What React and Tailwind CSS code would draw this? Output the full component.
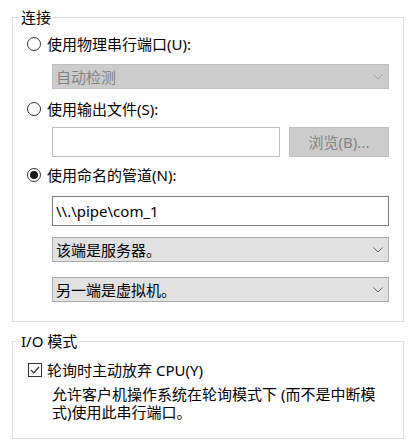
import React from 'react';

const Chevron = ({ color = '#606060' }) => (
  <svg width="10" height="6" viewBox="0 0 10 6" className="shrink-0">
    <path d="M0.5 0.5 L5 5 L9.5 0.5" fill="none" stroke={color} strokeWidth="1" />
  </svg>
);

const Radio = ({ checked }) => (
  <div className="w-[14px] h-[14px] rounded-full border border-[#333333] bg-white flex items-center justify-center shrink-0">
    {checked && <div className="w-[8px] h-[8px] rounded-full bg-[#1a1a1a]" />}
  </div>
);

const Checkbox = () => (
  <div className="w-[14px] h-[14px] border border-[#333333] bg-white flex items-center justify-center shrink-0">
    <svg width="10" height="8" viewBox="0 0 10 8">
      <path d="M1 4 L3.8 6.8 L9 1" fill="none" stroke="#333333" strokeWidth="1.2" />
    </svg>
  </div>
);

const Select = ({ text, disabled }) => (
  <div
    className={`ml-[39px] w-[337px] h-[25px] flex items-center justify-between pl-[3px] pr-[5px] border ${
      disabled ? 'bg-[#cccccc] border-[#c0c0c0] text-[#838383]' : 'bg-[#e1e1e1] border-[#adadad] text-black'
    }`}
  >
    <span>{text}</span>
    <Chevron color={disabled ? '#a6a6a6' : '#606060'} />
  </div>
);

export default function App() {
  return (
    <div className="w-[415px] h-[448px] bg-white pt-[7px] pl-[12px] text-[15px] leading-[20px] text-black font-['Noto_Sans','Noto_Sans_CJK_SC',sans-serif]">
      <fieldset className="w-[392px] border border-[#dcdcdc] pt-[7px] pb-[19px]">
        <legend className="ml-[6px] px-[2px]">连接</legend>

        <div className="flex items-center ml-[14px] gap-[6px]">
          <Radio />
          <span>使用物理串行端口(U):</span>
        </div>
        <div className="mt-[10px]">
          <Select text="自动检测" disabled />
        </div>

        <div className="flex items-center ml-[14px] gap-[6px] mt-[10px]">
          <Radio />
          <span>使用输出文件(S):</span>
        </div>
        <div className="flex ml-[39px] mt-[8px] gap-[9px]">
          <div className="w-[228px] h-[30px] border border-[#bfbfbf] bg-white" />
          <div className="w-[100px] h-[30px] border border-[#bfbfbf] bg-[#cccccc] text-[#838383] flex items-center justify-center">
            浏览(B)...
          </div>
        </div>

        <div className="flex items-center ml-[14px] gap-[6px] mt-[8px]">
          <Radio checked />
          <span>使用命名的管道(N):</span>
        </div>
        <div className="ml-[39px] mt-[11px] w-[337px] h-[30px] border border-[#7a7a7a] bg-white flex items-center pl-[3px]">
          {'\\\\.\\pipe\\com_1'}
        </div>
        <div className="mt-[11px]">
          <Select text="该端是服务器。" />
        </div>
        <div className="mt-[15px]">
          <Select text="另一端是虚拟机。" />
        </div>
      </fieldset>

      <fieldset className="w-[392px] border border-[#dcdcdc] mt-[9px] pt-[9px] pb-[17px]">
        <legend className="ml-[6px] px-[2px]">I/O 模式</legend>
        <div className="flex items-center ml-[15px] gap-[5px]">
          <Checkbox />
          <span>轮询时主动放弃 CPU(Y)</span>
        </div>
        <div className="ml-[39px] mt-[5px] leading-[18px] whitespace-nowrap">
          允许客户机操作系统在轮询模式下 (而不是中断模
          <br />
          式)使用此串行端口。
        </div>
      </fieldset>
    </div>
  );
}
